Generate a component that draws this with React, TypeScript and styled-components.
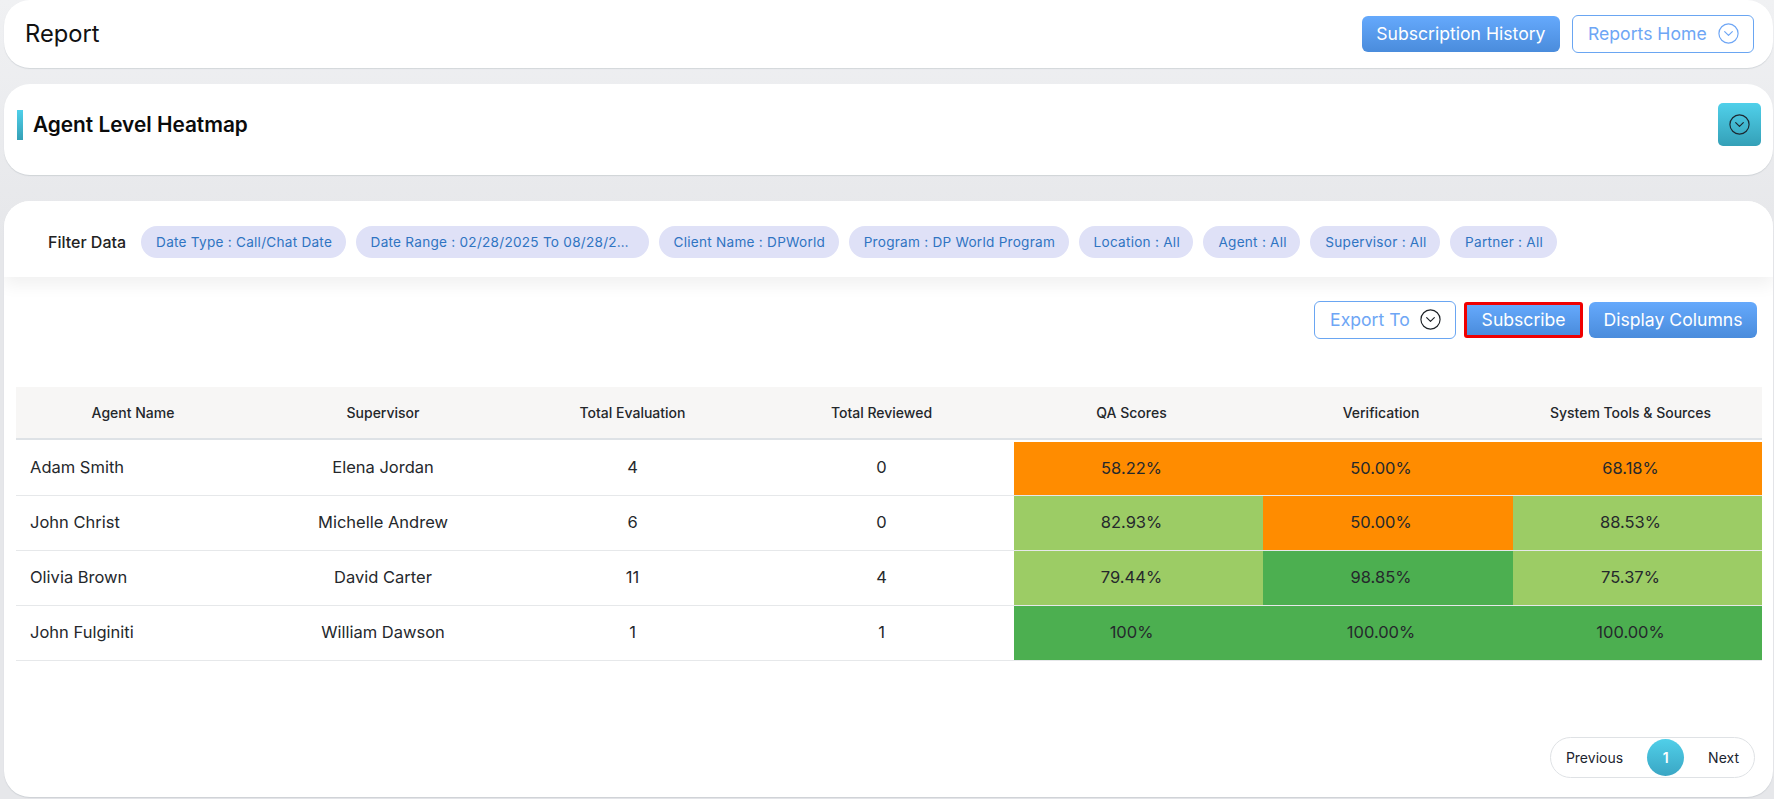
import React from "react";
import styled, { createGlobalStyle } from "styled-components";
import { CircleChevronDown } from "lucide-react";

const GlobalStyle = createGlobalStyle`
  html, body {
    margin: 0;
    padding: 0;
    height: 100%;
    overflow: hidden;
    background: #e7e8eb;
    font-family: Inter, "Liberation Sans", sans-serif;
    color: #212529;
  }
  * { box-sizing: border-box; }
`;

const Page = styled.div`
  display: flex;
  flex-direction: column;
  height: 799px;
  padding: 0 1px 0 4px;
  background: linear-gradient(180deg, #f0f1f3 0%, #e6e7ea 30%);
`;

const Card = styled.section`
  background: #fff;
  border-radius: 26px;
  box-shadow: 0 1px 1px rgba(120, 130, 140, 0.22);
`;

const TitleCard = styled(Card)`
  display: flex;
  align-items: center;
  justify-content: space-between;
  height: 68px;
  padding: 0 19px 0 21px;
`;

const PageTitle = styled.h1`
  margin: 0 0 1px;
  font-size: 23.7px;
  font-weight: 400;
  color: #111;
`;

const ButtonRow = styled.div`
  display: flex;
  align-items: center;
  gap: 12px;
`;

const PrimaryButton = styled.button<{ $outlined?: boolean }>`
  height: 36px;
  padding: 0 14.5px 1px;
  border: ${({ $outlined }) => ($outlined ? "3px solid #f00000" : "none")};
  border-radius: ${({ $outlined }) => ($outlined ? "3px" : "6px")};
  background: linear-gradient(180deg, #65a9fc 0%, #4a8cdc 100%);
  color: #fff;
  font-family: inherit;
  font-size: 17.6px;
  font-weight: 400;
  white-space: nowrap;
`;

const GhostButton = styled.button<{ $width: number; $iconColor: string }>`
  display: flex;
  align-items: center;
  justify-content: space-between;
  width: ${({ $width }) => $width}px;
  height: 38px;
  padding: 0 13px 2px 15px;
  border: 1px solid #6aa6f2;
  border-radius: 6px;
  background: #fff;
  color: #6ea6f5;
  font-family: inherit;
  font-size: 17.6px;
  white-space: nowrap;

  svg {
    color: ${({ $iconColor }) => $iconColor};
  }
`;

const HeatmapCard = styled(Card)`
  display: flex;
  align-items: flex-start;
  justify-content: space-between;
  height: 91px;
  margin-top: 16px;
  padding: 19px 12px 0 13px;
`;

const HeadingWrap = styled.div`
  display: flex;
  align-items: center;
  gap: 10px;
  height: 43px;
`;

const HeadingBar = styled.span`
  width: 6px;
  height: 30px;
  background: linear-gradient(180deg, #4fd0ea 0%, #35a0b6 100%);
`;

const Heading = styled.h2`
  margin: 0;
  font-size: 20.8px;
  font-weight: 600;
  color: #0b0b0b;
`;

const ToggleButton = styled.button`
  display: flex;
  align-items: center;
  justify-content: center;
  width: 43px;
  height: 43px;
  padding: 0;
  border: none;
  border-radius: 5px;
  background: linear-gradient(180deg, #50d0ea 0%, #34a0b7 100%);
  color: #1d2730;
`;

const ReportCard = styled(Card)`
  display: flex;
  flex-direction: column;
  height: 596px;
  margin-top: 26px;
  overflow: hidden;
`;

const FilterBar = styled.div`
  display: flex;
  align-items: center;
  flex: none;
  height: 76px;
  padding: 5px 0 0 44px;
  background: #fff;
  box-shadow: 0 8px 16px rgba(0, 0, 0, 0.06);
`;

const FilterLabel = styled.span`
  margin-right: 15px;
  font-size: 16px;
  font-weight: 500;
  color: #222;
  white-space: nowrap;
`;

const ChipList = styled.div`
  display: flex;
  gap: 10px;
`;

const Chip = styled.span<{ $maxWidth?: number }>`
  display: block;
  height: 32px;
  max-width: ${({ $maxWidth }) => ($maxWidth ? `${$maxWidth}px` : "none")};
  padding: 0 13.5px 0 15px;
  border-radius: 16px;
  background: #dfe1f7;
  color: #2f74c2;
  font-size: 13.6px;
  letter-spacing: 0.25px;
  line-height: 32px;
  white-space: nowrap;
  overflow: hidden;
  text-overflow: ellipsis;
`;

const Toolbar = styled.div`
  display: flex;
  align-items: center;
  justify-content: flex-end;
  gap: 6px;
  margin-top: 24px;
  padding-right: 16px;

  > :first-child {
    margin-right: 2px;
  }
`;

const TableWrap = styled.div`
  margin-top: 48px;
  padding: 0 11px 0 12px;
`;

const Table = styled.table`
  width: 100%;
  border-collapse: separate;
  border-spacing: 0;
  table-layout: fixed;
`;

const Col = styled.col<{ $width: number }>`
  width: ${({ $width }) => $width}px;
`;

const HeadCell = styled.th<{ $score?: boolean }>`
  height: 53px;
  padding: ${({ $score }) => ($score ? "0 14px 0 0" : "0")};
  border-bottom: 2px solid #dee2e6;
  background: #f7f6f5;
  font-size: 14px;
  font-weight: 500;
  color: #24272b;
`;

const Row = styled.tr`
  &:first-child td {
    height: 56px;
  }
  &:first-child td[data-score] {
    border-top: 2px solid #fff;
  }
`;

const Cell = styled.td<{ $left?: boolean }>`
  height: 55px;
  padding: ${({ $left }) => ($left ? "0 0 2px 14px" : "0 0 2px")};
  border-bottom: 1px solid #e6e8ea;
  background-clip: padding-box;
  font-size: 16.5px;
  color: #25282c;
  text-align: ${({ $left }) => ($left ? "left" : "center")};
`;

const ScoreCell = styled(Cell)<{ $level: Level }>`
  padding: 0 14px 2px 0;
  background-color: ${({ $level }) => levelColors[$level]};
`;

const Pagination = styled.nav`
  display: flex;
  align-items: center;
  align-self: flex-end;
  height: 41px;
  margin: 76px 18px 0 0;
  padding: 0 15px;
  border: 1px solid #dfe2e5;
  border-radius: 21px;
  background: #fff;
  font-size: 14px;
  color: #1c2430;
`;

const PageCurrent = styled.span`
  display: flex;
  align-items: center;
  justify-content: center;
  width: 37px;
  height: 37px;
  margin: 0 24px;
  border-radius: 50%;
  background: linear-gradient(180deg, #50cfe9 0%, #3aa6c4 100%);
  color: #fff;
  font-weight: 600;
`;

type Level = "low" | "mid" | "high";

const levelColors: Record<Level, string> = {
  low: "#ff8c00",
  mid: "#9ccc65",
  high: "#4caf50",
};

const chips: { label: string; maxWidth?: number }[] = [
  { label: "Date Type : Call/Chat Date" },
  { label: "Date Range : 02/28/2025 To 08/28/2025", maxWidth: 293 },
  { label: "Client Name : DPWorld" },
  { label: "Program : DP World Program" },
  { label: "Location : All" },
  { label: "Agent : All" },
  { label: "Supervisor : All" },
  { label: "Partner : All" },
];

const columns = [
  { title: "Agent Name", width: 234 },
  { title: "Supervisor", width: 266 },
  { title: "Total Evaluation", width: 233 },
  { title: "Total Reviewed", width: 265 },
  { title: "QA Scores", width: 249, score: true },
  { title: "Verification", width: 250, score: true },
  { title: "System Tools & Sources", width: 249, score: true },
];

const rows: {
  agent: string;
  supervisor: string;
  evaluated: number;
  reviewed: number;
  scores: [string, Level][];
}[] = [
  {
    agent: "Adam Smith",
    supervisor: "Elena Jordan",
    evaluated: 4,
    reviewed: 0,
    scores: [["58.22%", "low"], ["50.00%", "low"], ["68.18%", "low"]],
  },
  {
    agent: "John Christ",
    supervisor: "Michelle Andrew",
    evaluated: 6,
    reviewed: 0,
    scores: [["82.93%", "mid"], ["50.00%", "low"], ["88.53%", "mid"]],
  },
  {
    agent: "Olivia Brown",
    supervisor: "David Carter",
    evaluated: 11,
    reviewed: 4,
    scores: [["79.44%", "mid"], ["98.85%", "high"], ["75.37%", "mid"]],
  },
  {
    agent: "John Fulginiti",
    supervisor: "William Dawson",
    evaluated: 1,
    reviewed: 1,
    scores: [["100%", "high"], ["100.00%", "high"], ["100.00%", "high"]],
  },
];

export default function App() {
  return (
    <Page>
      <GlobalStyle />
      <TitleCard>
        <PageTitle>Report</PageTitle>
        <ButtonRow>
          <PrimaryButton>Subscription History</PrimaryButton>
          <GhostButton $width={182} $iconColor="#6ea6f5">
            Reports Home
            <CircleChevronDown size={23} strokeWidth={1.2} />
          </GhostButton>
        </ButtonRow>
      </TitleCard>

      <HeatmapCard>
        <HeadingWrap>
          <HeadingBar />
          <Heading>Agent Level Heatmap</Heading>
        </HeadingWrap>
        <ToggleButton aria-label="Toggle filters">
          <CircleChevronDown size={23} strokeWidth={1.2} />
        </ToggleButton>
      </HeatmapCard>

      <ReportCard>
        <FilterBar>
          <FilterLabel>Filter Data</FilterLabel>
          <ChipList>
            {chips.map((chip) => (
              <Chip key={chip.label} $maxWidth={chip.maxWidth}>
                {chip.label}
              </Chip>
            ))}
          </ChipList>
        </FilterBar>

        <Toolbar>
          <GhostButton $width={142} $iconColor="#1d2126">
            Export To
            <CircleChevronDown size={23} strokeWidth={1.2} />
          </GhostButton>
          <PrimaryButton $outlined>Subscribe</PrimaryButton>
          <PrimaryButton>Display Columns</PrimaryButton>
        </Toolbar>

        <TableWrap>
          <Table>
            <colgroup>
              {columns.map((col) => (
                <Col key={col.title} $width={col.width} />
              ))}
            </colgroup>
            <thead>
              <tr>
                {columns.map((col) => (
                  <HeadCell key={col.title} $score={col.score}>
                    {col.title}
                  </HeadCell>
                ))}
              </tr>
            </thead>
            <tbody>
              {rows.map((row) => (
                <Row key={row.agent}>
                  <Cell $left>{row.agent}</Cell>
                  <Cell>{row.supervisor}</Cell>
                  <Cell>{row.evaluated}</Cell>
                  <Cell>{row.reviewed}</Cell>
                  {row.scores.map(([value, level], i) => (
                    <ScoreCell key={i} $level={level} data-score>
                      {value}
                    </ScoreCell>
                  ))}
                </Row>
              ))}
            </tbody>
          </Table>
        </TableWrap>

        <Pagination>
          <span>Previous</span>
          <PageCurrent>1</PageCurrent>
          <span>Next</span>
        </Pagination>
      </ReportCard>
    </Page>
  );
}
